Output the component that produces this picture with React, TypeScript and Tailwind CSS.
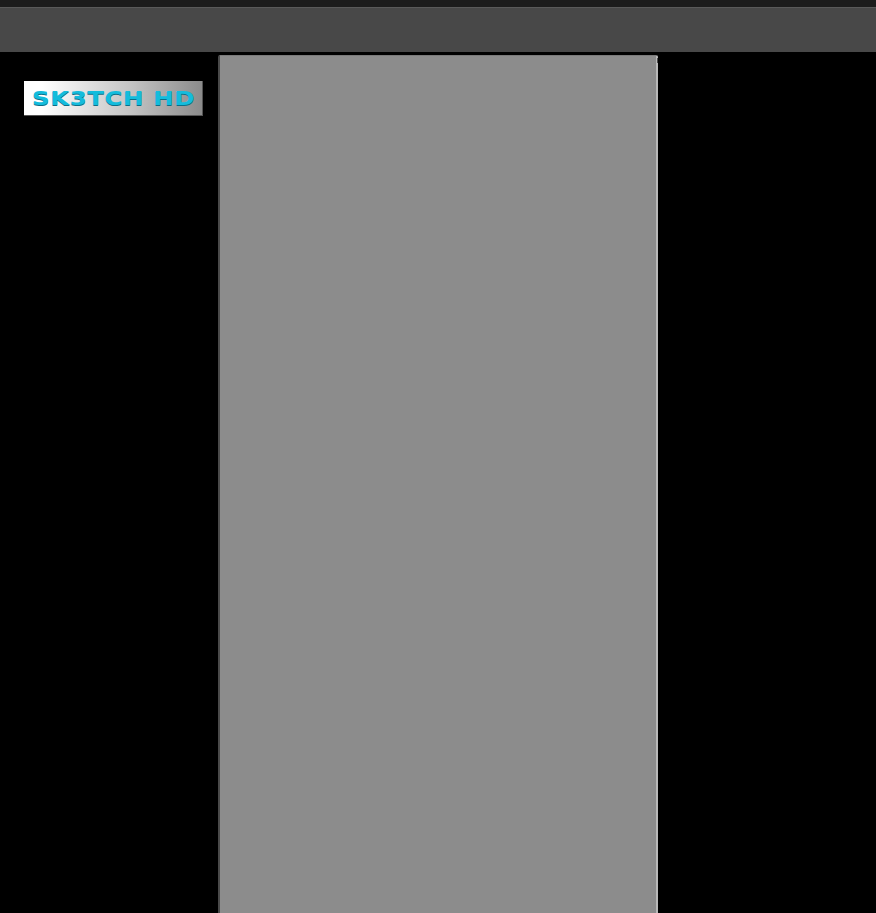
function App() {
    return (
        <div className="flex h-[913px] w-[876px] flex-col overflow-hidden bg-black">
            <div className="h-[7px] shrink-0 bg-[#1c1c1c]"></div>
            <div className="h-[45px] shrink-0 border-t border-[#5a5a5a] bg-[#484848]"></div>
            <div className="flex flex-1 items-start bg-black pt-[3px]">
                <div className="w-[218px] shrink-0 pl-6 pt-[26px]">
                    <div className="flex h-[35px] w-[179px] items-center overflow-hidden border-b border-r border-[#555555] bg-gradient-to-r from-white from-10% via-[#c4c4c4] via-60% to-[#8c8c8c] pl-2">
                        <span className="inline-block origin-left scale-x-[1.22] font-['DejaVu_Sans',sans-serif] text-[20px] font-bold leading-none tracking-[0.5px] whitespace-nowrap text-[#14bcdc] [text-shadow:0_1px_0_#0b6f88]">
                            SK3TCH HD
                        </span>
                    </div>
                </div>
                <div className="relative h-[880px] w-[440px] shrink-0 rounded-t-[2px] border-l-2 border-r-2 border-t border-l-[#4a4a4a] border-r-[#b8b8b8] border-t-[#7a7a7a] bg-[#8c8c8c]">
                    <div className="absolute -right-[2px] top-[2px] h-[5px] w-[1px] bg-[#4a4a4a]"></div>
                </div>
            </div>
        </div>
    );
}

export default App;
